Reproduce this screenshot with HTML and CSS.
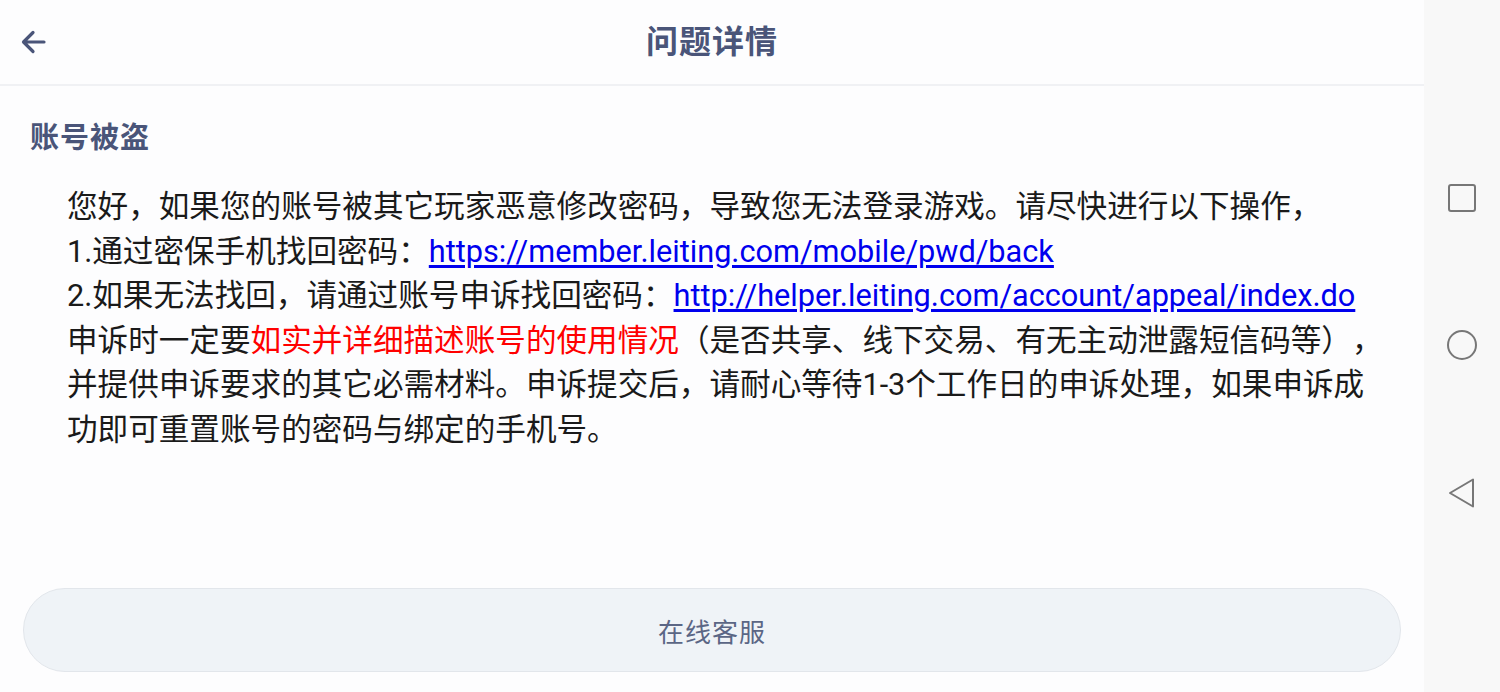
FILE: index.html
```html
<!DOCTYPE html>
<html lang="zh">
<head>
<meta charset="utf-8">
<link rel="stylesheet" href="styles.css">
</head>
<body>
<div class="screen">
  <div class="main">
    <header class="topbar">
      <button class="back" aria-label="back">
        <svg width="30" height="30" viewBox="0 0 30 30"><path d="M26 15H6M15 5.5L5.5 15L15 24.5" fill="none" stroke="#4a5579" stroke-width="3.2" stroke-linecap="round" stroke-linejoin="round"/></svg>
      </button>
      <h1 class="title">问题详情</h1>
    </header>
    <section class="detail">
      <h2 class="q">账号被盗</h2>
      <p class="answer">您好，如果您的账号被其它玩家恶意修改密码，导致您无法登录游戏。请尽快进行以下操作，<br>1.通过密保手机找回密码：<a href="#">https://member.leiting.com/mobile/pwd/back</a><br>2.如果无法找回，请通过账号申诉找回密码：<a href="#">http://helper.leiting.com/account/appeal/index.do</a><br>申诉时一定要<span class="red">如实并详细描述账号的使用情况</span>（是否共享、线下交易、有无主动泄露短信码等），并提供申诉要求的其它必需材料。申诉提交后，请耐心等待1-3个工作日的申诉处理，如果申诉成功即可重置账号的密码与绑定的手机号。</p>
    </section>
    <div class="actions">
      <button class="service">在线客服</button>
    </div>
  </div>
  <nav class="navbar">
    <svg width="30" height="30" viewBox="0 0 30 30"><rect x="2" y="2" width="26" height="26" rx="2" fill="none" stroke="#777" stroke-width="2"/></svg>
    <svg width="32" height="32" viewBox="0 0 32 32"><circle cx="16" cy="16" r="14" fill="none" stroke="#777" stroke-width="2"/></svg>
    <svg width="30" height="32" viewBox="0 0 30 32"><path d="M26 2.5V29.5L3 16Z" fill="none" stroke="#777" stroke-width="2" stroke-linejoin="round"/></svg>
  </nav>
</div>
</body>
</html>
```

FILE: styles.css
```css
* { box-sizing: border-box; }
html, body { margin: 0; padding: 0; }
body {
  width: 1500px;
  height: 692px;
  overflow: hidden;
  font-family: "Roboto", "Noto Sans CJK SC", sans-serif;
  background: #fff;
}
.screen {
  display: flex;
  height: 692px;
}
.main {
  width: 1424px;
  display: flex;
  flex-direction: column;
  background: #fdfdfe;
}
.topbar {
  height: 86px;
  border-bottom: 2px solid #f0f1f4;
  display: flex;
  align-items: center;
  justify-content: center;
  position: relative;
}
.back {
  position: absolute;
  left: 18px;
  top: 27px;
  border: 0;
  background: none;
  padding: 0;
  display: flex;
}
.title {
  margin: 0;
  font-size: 32px;
  font-weight: 700;
  color: #4a5579;
  line-height: 44px;
  letter-spacing: 1px;
}
.detail {
  padding: 30px 30px 0;
}
.q {
  margin: 0;
  font-size: 29px;
  font-weight: 700;
  color: #4a5579;
  line-height: 44px;
  letter-spacing: 1px;
}
.answer {
  margin: 25px 10px 0 37px;
  font-size: 30.6px;
  line-height: 44.5px;
  color: #1a1a1a;
  text-spacing-trim: space-all;
}
.answer a {
  font-size: 30.7px;
  color: #0000ee;
  text-decoration: underline;
  text-underline-offset: 3px;
}
.red { color: #ff0000; }
.actions {
  margin-top: auto;
  padding: 0 23px 20px;
}
.service {
  width: 100%;
  height: 84px;
  border-radius: 42px;
  border: 1px solid #e2e6eb;
  background: #eff3f7;
  font-family: "Noto Sans CJK SC", sans-serif;
  font-size: 26px;
  color: #5b6685;
  letter-spacing: 1px;
}
.navbar {
  width: 76px;
  background: #f8f8f8;
  display: flex;
  flex-direction: column;
  align-items: center;
  padding-top: 183px;
  gap: 116px;
}
.navbar svg { display: block; }
```
